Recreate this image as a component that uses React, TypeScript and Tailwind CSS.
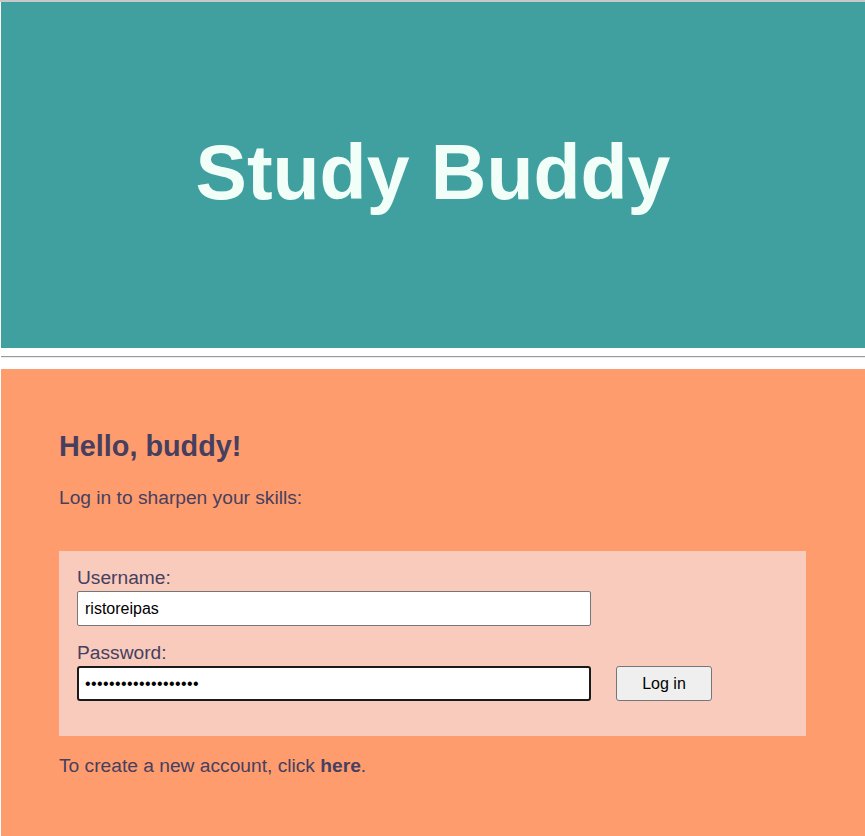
import React from "react";

const font = { fontFamily: '"Liberation Sans", Arial, sans-serif' };

export default function App() {
  return (
    <div className="min-h-[836px] bg-white border-t-2 border-[#c8c8c8]" style={font}>
      <header className="h-[346px] ml-px bg-[#40a0a0] flex items-center justify-center">
        <h1 className="text-[77px] leading-[90px] font-bold text-[#f2fff9] -mt-[6px]">Study Buddy</h1>
      </header>

      <div className="ml-px mt-[8px]">
        <div className="h-px bg-[#9a9a9a]" />
        <div className="h-px bg-[#ececec]" />
      </div>

      <main className="ml-px mt-[11px] min-h-[467px] bg-[#ff9c6e] text-[#463f5f] pl-[58px] pt-[61px]">
        <h2 className="text-[28.8px] leading-[33px] font-bold">Hello, buddy!</h2>
        <p className="text-[19.2px] leading-[22px] mt-[24px]">Log in to sharpen your skills:</p>

        <form className="mt-[42px] w-[747px] bg-[#f9cbbc] pl-[18px] pt-[16px] pb-[35px]">
          <label className="block text-[19.2px] leading-[22px]">Username:</label>
          <input
            readOnly
            value="ristoreipas"
            className="mt-[2px] block w-[514px] h-[35px] bg-white border border-[#767676] rounded-[2px] px-[7px] text-[16px] text-black outline-none"
            style={font}
          />
          <label className="block mt-[16px] text-[19.2px] leading-[22px]">Password:</label>
          <div className="mt-[2px] flex items-center gap-[25px]">
            <input
              readOnly
              type="password"
              value="ristoreipas12345678"
              className="block w-[514px] h-[35px] bg-white border-2 border-[#1a1a1a] rounded-[3px] pl-[6px] text-[16px] text-black outline-none tracking-[0.4px]"
              style={font}
            />
            <button
              type="button"
              className="w-[96px] h-[35px] bg-[#efefef] border border-[#767676] rounded-[3px] text-[16px] text-black"
              style={font}
            >
              Log in
            </button>
          </div>
        </form>

        <p className="text-[19.2px] leading-[22px] mt-[19px]">
          To create a new account, click <a className="font-bold">here</a>.
        </p>
      </main>
    </div>
  );
}
